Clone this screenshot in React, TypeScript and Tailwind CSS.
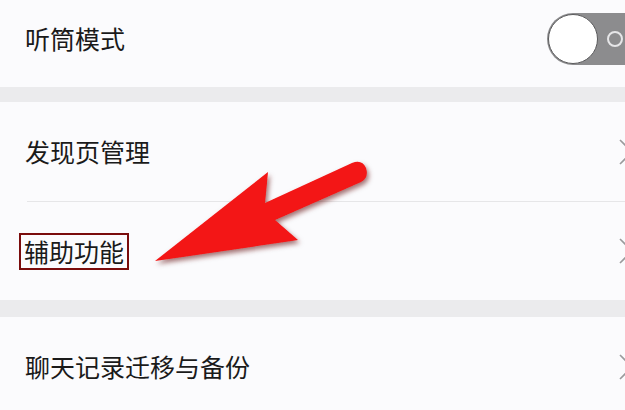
import type { ReactNode } from 'react';

const font = { fontFamily: '"Noto Sans CJK SC", "Noto Sans", sans-serif' };

function Chevron() {
  return (
    <svg className="ml-auto mr-[-10px] shrink-0" width="16" height="26" viewBox="0 0 16 26">
      <path d="M1 1 L13 13 L1 25" fill="none" stroke="#9a9a9c" strokeWidth="1.6" />
    </svg>
  );
}

function Toggle() {
  return (
    <div className="ml-auto mr-[-32px] flex h-[52px] w-[110px] shrink-0 items-center gap-[9px] rounded-full bg-[#8c8c8e] pl-px">
      <div className="h-[50px] w-[50px] rounded-full border-[1.5px] border-[#5a5a5c] bg-white" />
      <div className="h-[16px] w-[16px] rounded-full border-[2.5px] border-[#e6e6e8]" />
    </div>
  );
}

function Row({ children, right, className = '' }: { children: ReactNode; right?: ReactNode; className?: string }) {
  return (
    <div className={`flex items-center pl-[25px] text-[25px] text-[#1a1a1a] ${className}`}>
      {children}
      {right ?? <Chevron />}
    </div>
  );
}

export default function App() {
  return (
    <div className="relative flex h-[410px] w-[625px] flex-col overflow-hidden bg-[#ebebed]" style={font}>
      <div className="bg-[#fbfbfd] pb-[9px]">
        <Row className="h-[78px]" right={<Toggle />}>听筒模式</Row>
      </div>

      <div className="mt-[15px] bg-[#fbfbfd]">
        <Row className="h-[99px]">发现页管理</Row>
        <div className="ml-[27px] h-px bg-[#e6e6e8]" />
        <Row className="h-[98px]">
          <span className="-ml-[6px] border-2 border-[#7a0c0c] px-[3px] leading-[33px]">辅助功能</span>
        </Row>
      </div>

      <div className="mt-[17px] bg-[#fbfbfd]">
        <Row className="h-[100px]">聊天记录迁移与备份</Row>
      </div>

      {/* red annotation arrow lies over the list */}
      <svg className="pointer-events-none absolute inset-0" width="625" height="410" viewBox="0 0 625 410">
        <defs>
          <filter id="sh" x="-20%" y="-20%" width="140%" height="140%">
            <feDropShadow dx="2" dy="3" stdDeviation="2.5" floodColor="#5a0000" floodOpacity="0.55" />
          </filter>
        </defs>
        <path
          d="M155 261 L268 172 L265 203 L352 163 Q362 159 366 168 Q369 178 361 182 L275 220 L298 240 Z"
          fill="#f31414"
          filter="url(#sh)"
        />
      </svg>
    </div>
  );
}
